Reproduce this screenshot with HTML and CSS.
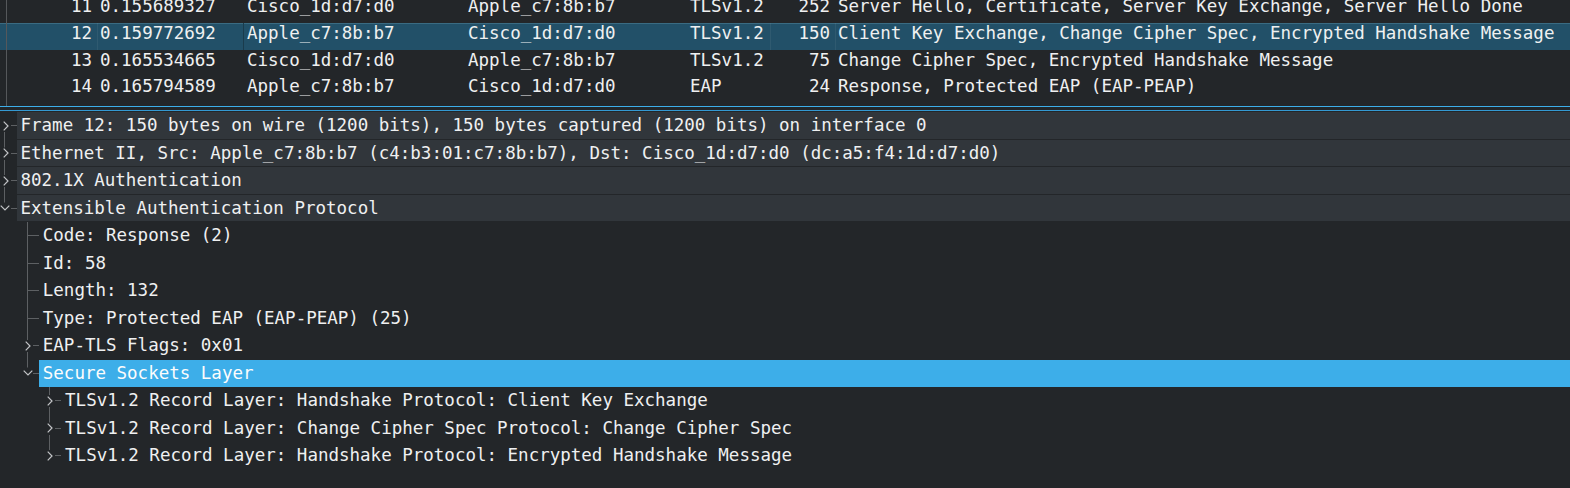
FILE: index.html
```html
<!DOCTYPE html>
<html>
<head>
<meta charset="utf-8">
<link rel="stylesheet" href="styles.css">
</head>
<body>
<div class="plist">
  <div class="prow first">
    <span class="c-no">11</span><span class="c-time">0.155689327</span><span class="c-src">Cisco_1d:d7:d0</span><span class="c-dst">Apple_c7:8b:b7</span><span class="c-proto">TLSv1.2</span><span class="c-len">252</span><span class="c-info">Server Hello, Certificate, Server Key Exchange, Server Hello Done</span>
  </div>
  <div class="prow psel">
    <span class="c-no">12</span><span class="c-time">0.159772692</span><span class="c-src">Apple_c7:8b:b7</span><span class="c-dst">Cisco_1d:d7:d0</span><span class="c-proto">TLSv1.2</span><span class="c-len">150</span><span class="c-info">Client Key Exchange, Change Cipher Spec, Encrypted Handshake Message</span>
  </div>
  <div class="prow">
    <span class="c-no">13</span><span class="c-time">0.165534665</span><span class="c-src">Cisco_1d:d7:d0</span><span class="c-dst">Apple_c7:8b:b7</span><span class="c-proto">TLSv1.2</span><span class="c-len">75</span><span class="c-info">Change Cipher Spec, Encrypted Handshake Message</span>
  </div>
  <div class="prow">
    <span class="c-no">14</span><span class="c-time">0.165794589</span><span class="c-src">Apple_c7:8b:b7</span><span class="c-dst">Cisco_1d:d7:d0</span><span class="c-proto">EAP</span><span class="c-len">24</span><span class="c-info">Response, Protected EAP (EAP-PEAP)</span>
  </div>
</div>

<div class="details">
  <div class="tree">
    <div class="trow top">
      <span class="ind br node n-first"><svg class="ch-r" width="6" height="10" viewBox="0 0 6 10"><polyline points="0.7,0.7 5,5 0.7,9.3"/></svg></span>
      <span class="lbl">Frame 12: 150 bytes on wire (1200 bits), 150 bytes captured (1200 bits) on interface 0</span>
    </div>
    <div class="trow top">
      <span class="ind br node n-mid"><svg class="ch-r" width="6" height="10" viewBox="0 0 6 10"><polyline points="0.7,0.7 5,5 0.7,9.3"/></svg></span>
      <span class="lbl">Ethernet II, Src: Apple_c7:8b:b7 (c4:b3:01:c7:8b:b7), Dst: Cisco_1d:d7:d0 (dc:a5:f4:1d:d7:d0)</span>
    </div>
    <div class="trow top">
      <span class="ind br node n-mid"><svg class="ch-r" width="6" height="10" viewBox="0 0 6 10"><polyline points="0.7,0.7 5,5 0.7,9.3"/></svg></span>
      <span class="lbl">802.1X Authentication</span>
    </div>
    <div class="trow top">
      <span class="ind br node n-last"><svg class="ch-d" width="10" height="6" viewBox="0 0 10 6"><polyline points="0.7,0.7 5,5 9.3,0.7"/></svg></span>
      <span class="lbl">Extensible Authentication Protocol</span>
    </div>

    <div class="trow">
      <span class="ind"></span><span class="ind br tee"></span>
      <span class="lbl">Code: Response (2)</span>
    </div>
    <div class="trow">
      <span class="ind"></span><span class="ind br tee"></span>
      <span class="lbl">Id: 58</span>
    </div>
    <div class="trow">
      <span class="ind"></span><span class="ind br tee"></span>
      <span class="lbl">Length: 132</span>
    </div>
    <div class="trow">
      <span class="ind"></span><span class="ind br tee"></span>
      <span class="lbl">Type: Protected EAP (EAP-PEAP) (25)</span>
    </div>
    <div class="trow">
      <span class="ind"></span><span class="ind br node n-mid"><svg class="ch-r" width="6" height="10" viewBox="0 0 6 10"><polyline points="0.7,0.7 5,5 0.7,9.3"/></svg></span>
      <span class="lbl">EAP-TLS Flags: 0x01</span>
    </div>
    <div class="trow sel">
      <span class="ind"></span><span class="ind br node n-last"><svg class="ch-d" width="10" height="6" viewBox="0 0 10 6"><polyline points="0.7,0.7 5,5 9.3,0.7"/></svg></span>
      <span class="lbl">Secure Sockets Layer</span>
    </div>

    <div class="trow">
      <span class="ind"></span><span class="ind"></span><span class="ind br node n-mid"><svg class="ch-r" width="6" height="10" viewBox="0 0 6 10"><polyline points="0.7,0.7 5,5 0.7,9.3"/></svg></span>
      <span class="lbl">TLSv1.2 Record Layer: Handshake Protocol: Client Key Exchange</span>
    </div>
    <div class="trow">
      <span class="ind"></span><span class="ind"></span><span class="ind br node n-mid"><svg class="ch-r" width="6" height="10" viewBox="0 0 6 10"><polyline points="0.7,0.7 5,5 0.7,9.3"/></svg></span>
      <span class="lbl">TLSv1.2 Record Layer: Change Cipher Spec Protocol: Change Cipher Spec</span>
    </div>
    <div class="trow">
      <span class="ind"></span><span class="ind"></span><span class="ind br node n-last"><svg class="ch-r" width="6" height="10" viewBox="0 0 6 10"><polyline points="0.7,0.7 5,5 0.7,9.3"/></svg></span>
      <span class="lbl">TLSv1.2 Record Layer: Handshake Protocol: Encrypted Handshake Message</span>
    </div>
  </div>
</div>
</body>
</html>
```

FILE: styles.css
```css
:root {
  --bg: #232629;
  --top: #31363b;
  --fg: #eff0f1;
  --line: #5d6063;
  --chev: #c3c5c8;
  --blue: #3daee9;
}

html, body {
  margin: 0;
  padding: 0;
  background: var(--bg);
  overflow: hidden;
}

body {
  width: 1570px;
  height: 488px;
  font-family: "DejaVu Sans Mono", "Liberation Mono", monospace;
  font-size: 17.5px;
  color: var(--fg);
}

/* ---------- packet list ---------- */
.plist {
  height: 107px;
  box-sizing: border-box;
  border-bottom: 1px solid var(--blue);
  overflow: hidden;
  background: linear-gradient(#55585b, #55585b) 6px 0 / 1px 100% no-repeat, var(--bg);
}

.prow {
  display: grid;
  grid-template-columns: 97px 146px 221px 222px 84px 65px 1fr;
  height: 26.75px;
  line-height: 21.5px;
  white-space: pre;
}

.prow.first {
  margin-top: -4px;
}

.prow span {
  overflow: hidden;
}

.c-no, .c-len {
  text-align: right;
  padding-right: 5px;
}

.c-time, .c-info { padding-left: 3px; }
.c-src, .c-dst, .c-proto { padding-left: 4px; }

.psel {
  background: #225068;
  box-shadow: inset 0 1px 0 #3a6b82;
}

.psel .c-no { background: linear-gradient(#55585b, #55585b) 6px 0 / 1px 100% no-repeat; }
.psel .c-time { box-shadow: inset 1px 0 0 rgba(255,255,255,0.06); }
.psel .c-src { box-shadow: inset 1px 0 0 #1a3b4c; }
.psel .c-len { box-shadow: inset 1px 0 0 rgba(255,255,255,0.06); }
.psel .c-info { box-shadow: inset 1px 0 0 rgba(255,255,255,0.06); }

/* ---------- details tree ---------- */
.details {
  margin-top: 3px;
  border-top: 1px solid #3499d2;
  padding-top: 1px;
}

.tree {
  margin-left: -1.8px;
}

.trow {
  display: flex;
  height: 27.5px;
  line-height: 27.5px;
  white-space: pre;
}

.ind {
  flex: none;
  width: 22.3px;
  height: 100%;
  display: flex;
  align-items: center;
}

.ind.br {
  width: 18.6px;
}

.tee {
  background:
    linear-gradient(var(--line), var(--line)) 6px 0 / 1px 100% no-repeat,
    linear-gradient(var(--line), var(--line)) 7px 50% / 11.6px 1px no-repeat;
}

.node svg {
  display: block;
  fill: none;
  stroke: var(--chev);
  stroke-width: 1.2;
}

.ch-r { margin-left: 4.3px; }
.ch-d { margin-left: 2px; }

.n-first {
  background:
    linear-gradient(var(--line), var(--line)) 6px 100% / 1px calc(50% - 6px) no-repeat,
    linear-gradient(var(--line), var(--line)) 12.5px 50% / 6.1px 1px no-repeat;
}

.n-mid {
  background:
    linear-gradient(var(--line), var(--line)) 6px 0 / 1px calc(50% - 6px) no-repeat,
    linear-gradient(var(--line), var(--line)) 6px 100% / 1px calc(50% - 6px) no-repeat,
    linear-gradient(var(--line), var(--line)) 12.5px 50% / 6.1px 1px no-repeat;
}

.n-last {
  background:
    linear-gradient(var(--line), var(--line)) 6px 0 / 1px calc(50% - 6px) no-repeat,
    linear-gradient(var(--line), var(--line)) 12.5px 50% / 6.1px 1px no-repeat;
}

.lbl {
  flex: 1;
  padding-left: 3.7px;
  overflow: hidden;
}

.top .lbl {
  background: var(--top);
  box-shadow: inset 0 -1px 0 var(--bg);
}

.sel .lbl {
  background: var(--blue);
  color: #fcfcfc;
}
```
